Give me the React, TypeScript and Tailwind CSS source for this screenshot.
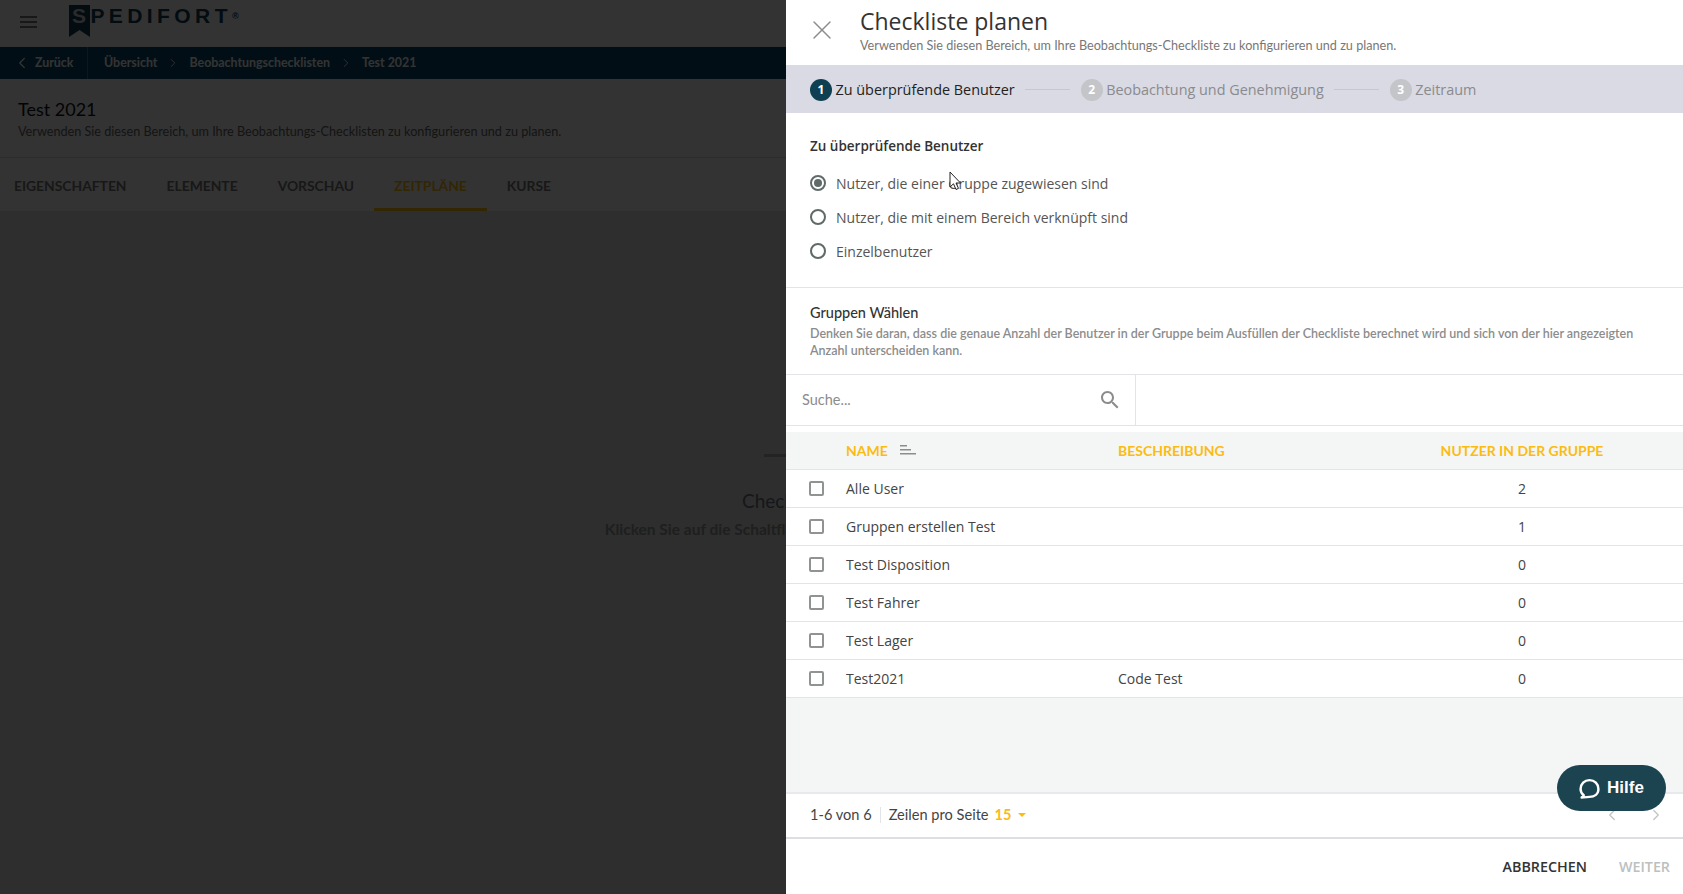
import { ChevronLeft, ChevronRight, X } from 'lucide-react'

const tabs = [
  { label: 'EIGENSCHAFTEN', active: false },
  { label: 'ELEMENTE', active: false },
  { label: 'VORSCHAU', active: false },
  { label: 'ZEITPLÄNE', active: true },
  { label: 'KURSE', active: false },
]

const steps = [
  { n: 1, label: 'Zu überprüfende Benutzer', active: true },
  { n: 2, label: 'Beobachtung und Genehmigung', active: false },
  { n: 3, label: 'Zeitraum', active: false },
]

const radios = [
  { label: 'Nutzer, die einer Gruppe zugewiesen sind', checked: true },
  { label: 'Nutzer, die mit einem Bereich verknüpft sind', checked: false },
  { label: 'Einzelbenutzer', checked: false },
]

const groups = [
  { name: 'Alle User', description: '', count: 2 },
  { name: 'Gruppen erstellen Test', description: '', count: 1 },
  { name: 'Test Disposition', description: '', count: 0 },
  { name: 'Test Fahrer', description: '', count: 0 },
  { name: 'Test Lager', description: '', count: 0 },
  { name: 'Test2021', description: 'Code Test', count: 0 },
]

const openSans = "font-['Open_Sans',sans-serif]"
const lato = "font-['Lato',sans-serif]"

function BackgroundPage() {
  return (
    <div className={`w-full h-full flex flex-col bg-[#e4e6e5] ${lato}`}>
      {/* Top bar */}
      <div className="h-[47px] bg-white flex items-start shrink-0 relative">
        <div className="ml-[20px] mt-[16px] w-[17px] flex flex-col gap-[3px]">
          <div className="h-[2px] bg-[#777]" />
          <div className="h-[2px] bg-[#777]" />
          <div className="h-[2px] bg-[#777]" />
        </div>
        <svg className="ml-[32px] mt-[5px]" width="21" height="32" viewBox="0 0 21 32">
          <path d="M0 0H21V32L10.5 25L0 32Z" fill="#0b3c55" />
        </svg>
        <span className="absolute left-[72px] top-[3px] font-['Liberation_Sans',sans-serif] font-bold text-[21px] leading-[26px] tracking-[0.21em] text-[#0b3c55]">
          <span className="text-[#cfd3d6]">S</span>PEDIFORT
          <sup className="text-[9px] tracking-normal">®</sup>
        </span>
      </div>

      {/* Breadcrumb */}
      <div className="h-[32px] bg-[#05496b] flex items-center shrink-0 text-white text-[12.4px] font-bold">
        <div className="w-[88px] h-full flex items-center border-r border-[#3b7a96] pl-[13px] gap-[4px]">
          <ChevronLeft size={18} strokeWidth={1.6} />
          <span>Zurück</span>
        </div>
        <span className="ml-[16px]">Übersicht</span>
        <ChevronRight size={14} strokeWidth={1.5} className="mx-[9px]" />
        <span>Beobachtungschecklisten</span>
        <ChevronRight size={14} strokeWidth={1.5} className="mx-[9px]" />
        <span>Test 2021</span>
      </div>

      {/* Title */}
      <div className="h-[79px] bg-white border-b border-[#ddd] pl-[18px] pt-[18px] shrink-0 text-[#111]">
        <div className="text-[18px] leading-[24px]">Test 2021</div>
        <div className="mt-[2px] text-[12.65px] leading-[18px] text-[#666]">
          Verwenden Sie diesen Bereich, um Ihre Beobachtungs-Checklisten zu konfigurieren und zu planen.
        </div>
      </div>

      {/* Tabs */}
      <div className="h-[53px] bg-white flex shrink-0 text-[13.85px] font-bold text-[#777]">
        {tabs.map((tab) => (
          <div
            key={tab.label}
            className={`px-[20px] first:pl-[14px] pt-[7px] flex items-center border-b-[3px] ${
              tab.active ? 'border-[#fbbc12] text-[#fbbc12]' : 'border-transparent'
            }`}
          >
            {tab.label}
          </div>
        ))}
      </div>

      {/* Empty state */}
      <div className="flex-1 flex flex-col items-center pt-[243px]">
        <div className="w-[155px] h-[3px] bg-[#b0b0b0]" />
        <div className="mt-[32px] text-[19px] leading-[24px] text-[#6b7280]">Checkliste nicht geplant</div>
        <div className="mt-[6px] text-[15.5px] leading-[20px] font-bold text-[#999]">
          Klicken Sie auf die Schaltfläche, um einen neuen Zeitplan zu erstellen
        </div>
      </div>
    </div>
  )
}

function Stepper() {
  return (
    <div className="h-[48px] bg-[#d9dae3] flex items-center pl-[24px] pt-[1px] shrink-0 text-[14.4px]">
      {steps.map((step, i) => (
        <div key={step.n} className="flex items-center">
          {i > 0 && <div className="w-[45px] h-px bg-[#c6c7cf] mx-[10px]" />}
          <div
            className={`w-[22px] h-[22px] rounded-full flex items-center justify-center text-[12px] font-bold text-white ${
              step.active ? 'bg-[#0e3f52]' : 'bg-[#c4c5c8] ml-[1px]'
            }`}
          >
            {step.n}
          </div>
          <span className={`ml-[3.5px] ${step.active ? 'text-[#222]' : 'text-[#8a8a8f]'}`}>{step.label}</span>
        </div>
      ))}
    </div>
  )
}

function DrawerPanel() {
  return (
    <div className={`absolute top-0 right-0 bottom-0 w-[897px] bg-white flex flex-col text-[#333] ${openSans}`}>
      {/* Header */}
      <div className="h-[65px] flex shrink-0">
        <div className="w-[74px] pl-[20px] pt-[14px] text-[#8c8c8c]">
          <X size={32} strokeWidth={1.1} />
        </div>
        <div className="pt-[5px]">
          <div className="text-[23px] leading-[32px] text-[#333]">Checkliste planen</div>
          <div className={`mt-[1px] text-[12.65px] leading-[16px] text-[#777] ${lato}`}>
            Verwenden Sie diesen Bereich, um Ihre Beobachtungs-Checkliste zu konfigurieren und zu planen.
          </div>
        </div>
      </div>

      <Stepper />

      {/* Target users */}
      <div className="h-[175px] shrink-0 border-b border-[#e3e4e8] pl-[24px] pt-[23px]">
        <div className="text-[13.5px] leading-[20px] font-semibold text-[#333]">Zu überprüfende Benutzer</div>
        <div className="mt-[10px] flex flex-col">
          {radios.map((radio) => (
            <div key={radio.label} className="h-[34px] flex items-center">
              <div className="w-[16px] h-[16px] rounded-full border-2 border-[#606a68] flex items-center justify-center">
                {radio.checked && <div className="w-[8px] h-[8px] rounded-full bg-[#606a68]" />}
              </div>
              <span className="ml-[10px] text-[14px] text-[#555]">{radio.label}</span>
            </div>
          ))}
        </div>
      </div>

      {/* Group selection */}
      <div className="h-[87px] shrink-0 border-b border-[#e3e4e8] pl-[24px] pt-[15px]">
        <div className={`text-[14.5px] leading-[20px] font-medium text-[#333] ${lato}`}>Gruppen Wählen</div>
        <div className={`mt-[2px] w-[835px] text-[12.5px] leading-[17px] font-semibold text-[#8c8c8c] ${lato}`}>
          Denken Sie daran, dass die genaue Anzahl der Benutzer in der Gruppe beim Ausfüllen der Checkliste berechnet
          wird und sich von der hier angezeigten Anzahl unterscheiden kann.
        </div>
      </div>

      {/* Search */}
      <div className="h-[51px] shrink-0 border-b border-[#e3e4e8] flex">
        <div className="w-[350px] border-r border-[#e3e4e8] flex items-center justify-between pl-[16px] pr-[13px]">
          <span className={`text-[14.5px] text-[#8c8c8c] ${lato}`}>Suche...</span>
          <svg width="24" height="24" viewBox="0 0 24 24" fill="#8c8c8c">
            <path d="M15.5 14h-.79l-.28-.27C15.41 12.59 16 11.11 16 9.5 16 5.91 13.09 3 9.5 3S3 5.91 3 9.5 5.91 16 9.5 16c1.61 0 3.09-.59 4.23-1.57l.27.28v.79l5 4.99L20.49 19l-4.99-5zm-6 0C7.01 14 5 11.99 5 9.5S7.01 5 9.5 5 14 7.01 14 9.5 11.99 14 9.5 14z" />
          </svg>
        </div>
      </div>

      {/* Table */}
      <div className="flex-1 flex flex-col mt-[6px] bg-[#f4f6f5]">
        <div className={`grid grid-cols-[60px_272px_243px_322px] h-[38px] pb-[1px] items-center border-b border-[#e3e4e8] text-[14px] font-bold text-[#fbbc12] ${lato}`}>
          <div />
          <div className="flex items-center gap-[12px]">
            NAME
            <svg width="16" height="12" viewBox="0 0 16 12" fill="#8c8c8c">
              <rect x="0" y="1" width="7" height="1.5" />
              <rect x="0" y="5" width="11" height="1.5" />
              <rect x="0" y="9" width="16" height="1.5" />
            </svg>
          </div>
          <div>BESCHREIBUNG</div>
          <div className="text-center">NUTZER IN DER GRUPPE</div>
        </div>
        {groups.map((group) => (
          <div
            key={group.name}
            className="grid grid-cols-[60px_272px_243px_322px] h-[38px] items-center bg-white border-b border-[#e3e4e8] text-[14px] text-[#444]"
          >
            <div className="pl-[23px]">
              <div className="w-[15px] h-[15px] rounded-[2px] border-2 border-[#8f9493]" />
            </div>
            <div>{group.name}</div>
            <div>{group.description}</div>
            <div className="text-center">{group.count}</div>
          </div>
        ))}
      </div>

      {/* Pagination */}
      <div className={`h-[47px] shrink-0 border-y-2 border-t-[#e8e9ec] border-b-[#dcdde5] flex items-center pl-[24px] pr-[18px] pb-[1px] text-[14.6px] text-[#444] ${lato}`}>
        <span>1-6 von 6</span>
        <div className="w-px h-[16px] bg-[#e3e4e8] mx-[8px]" />
        <span>Zeilen pro Seite</span>
        <span className="ml-[6px] font-bold text-[#fbbc12]">15</span>
        <div className="ml-[7px] w-0 h-0 border-x-[4.5px] border-x-transparent border-t-[4.5px] border-t-[#fbbc12]" />
        <div className="ml-auto flex items-center gap-[26px] text-[#c2c6c5]">
          <ChevronLeft size={18} strokeWidth={1.8} />
          <ChevronRight size={18} strokeWidth={1.8} />
        </div>
      </div>

      {/* Actions */}
      <div className="h-[55px] shrink-0 flex items-center justify-end gap-[32px] pr-[13px] pt-[1px] text-[14.3px] font-semibold">
        <span className="text-[#333]">ABBRECHEN</span>
        <span className="text-[#bcc0bf]">WEITER</span>
      </div>

      {/* Help button */}
      <div className="absolute left-[771px] top-[765px] w-[109px] h-[46px] rounded-[23px] bg-[#1c4350] flex items-center justify-center gap-[7px] text-white font-['Liberation_Sans',sans-serif] font-bold text-[17px]">
        <svg width="21" height="21" viewBox="0 0 20 20" fill="none" stroke="white" strokeWidth="2.3">
          <path d="M4.5 16.5C2.5 15 1.5 12.8 1.5 10.5C1.5 5.8 5.2 2 10 2C14.8 2 18.5 5.8 18.5 10.5C18.5 15.2 14.8 18 10 18C8.5 18 5.5 18.5 2.5 18.5C3.5 18 4.2 17.3 4.5 16.5Z" strokeLinejoin="round" />
        </svg>
        Hilfe
      </div>

      {/* Mouse cursor */}
      <svg className="absolute left-[163px] top-[171px]" width="13" height="20" viewBox="0 0 13 20">
        <path d="M1 1V16L4.5 12.8L7 18.5L9.5 17.4L7 12H11.5Z" fill="white" stroke="#222" strokeWidth="1" />
      </svg>
    </div>
  )
}

export default function App() {
  return (
    <div className="relative w-full h-[894px] overflow-hidden">
      <BackgroundPage />
      <div className="absolute inset-0 bg-black/80" />
      <DrawerPanel />
    </div>
  )
}
